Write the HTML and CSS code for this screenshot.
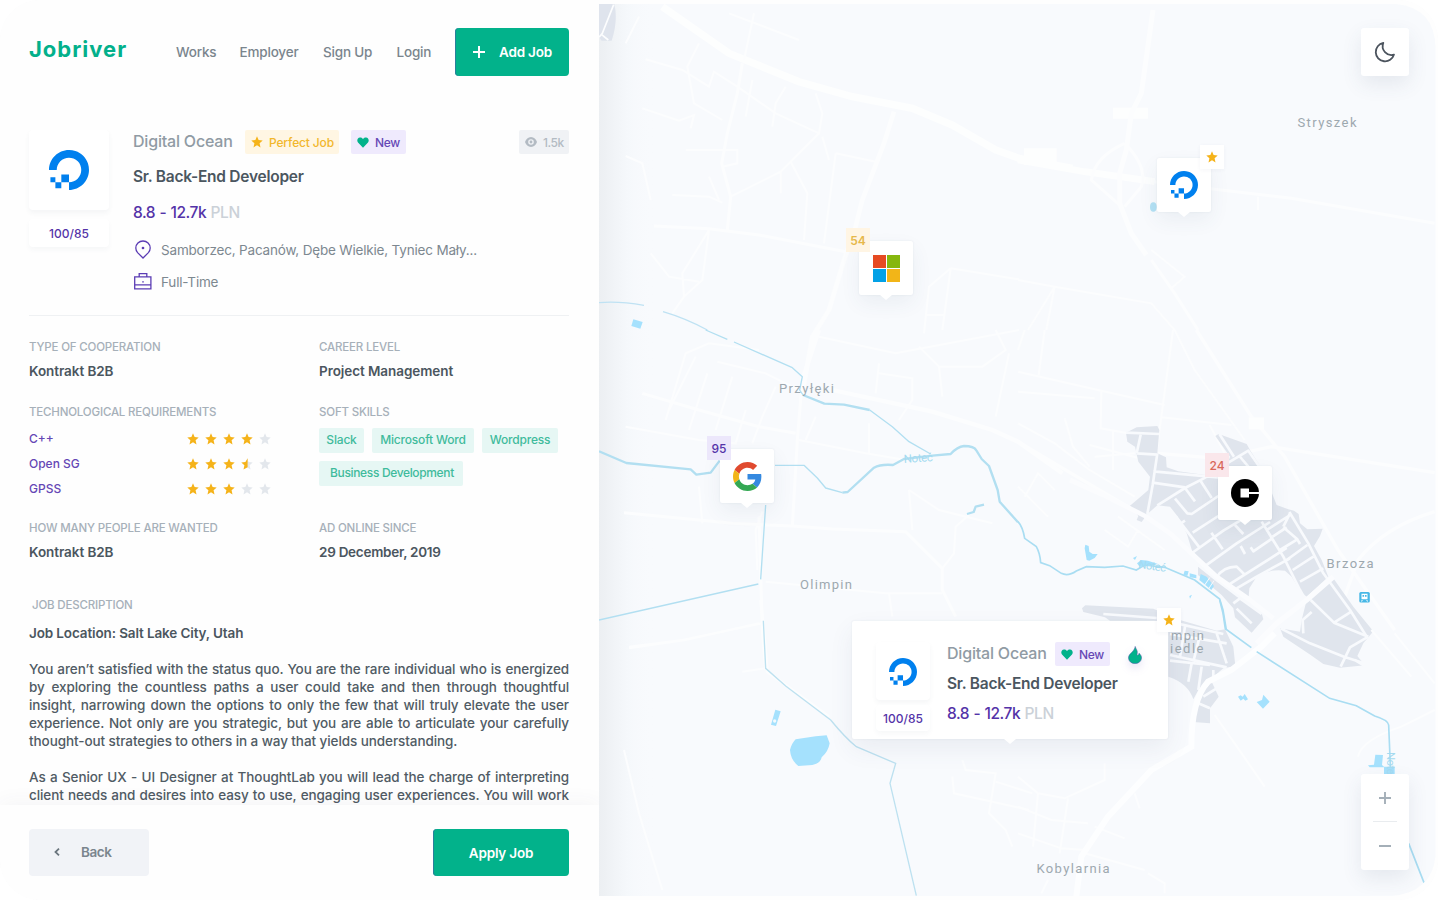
FILE: index.html
```html
<!DOCTYPE html>
<html lang="en">
<head>
<meta charset="utf-8">
<title>Jobriver</title>
<link rel="stylesheet" href="styles.css">
</head>
<body>
<svg class="defs" width="0" height="0">
  <symbol id="do" viewBox="0 0 24 24"><path fill="#0080ee" d="M12.04 0C5.408-.02.005 5.37.005 11.992h4.638c0-4.923 4.882-8.731 10.064-6.855a6.95 6.95 0 014.147 4.148c1.889 5.177-1.924 10.055-6.840 10.064v-4.610H7.391v4.623h4.610V24c7.860 0 13.967-7.588 11.397-15.830-1.115-3.590-3.985-6.446-7.575-7.575A12.800 12.800 0 0012.039 0zM7.390 19.362H3.828v3.564H7.390zm-3.563 0v-2.978H.85v2.978z"/></symbol>
  <symbol id="star" viewBox="0 0 12 12"><path fill="currentColor" d="M6 .3l1.6 3.800 4.100.4-3.100 2.700.9 4.200L6 9.200 2.500 11.400l.9-4.200L.3 4.500l4.100-.4z"/></symbol>
  <symbol id="half" viewBox="0 0 12 12"><path fill="#e3e7ec" d="M6 .3l1.600 3.800 4.100.4-3.100 2.700.9 4.200L6 9.200z"/><path fill="#f5b31a" d="M6.600 .3v9L2.500 11.400l.9-4.200L.3 4.500l4.100-.4z"/></symbol>
  <symbol id="heart" viewBox="0 0 12 11"><path fill="#02b28b" d="M6 10.800L1 5.600C-.4 3.800.3.600 3 .4 4.400.3 5.400 1 6 2 6.600 1 7.600.3 9 .4c2.700.2 3.400 3.400 2 5.200z"/></symbol>
</svg>
<div class="app">
  <section class="panel">
    <header class="top">
      <div class="brand">Jobriver</div>
      <nav class="nav"><a class="n1">Works</a><a class="n2">Employer</a><a class="n3">Sign Up</a><a class="n4">Login</a></nav>
      <button class="btn add"><svg width="12" height="12" viewBox="0 0 12 12"><path d="M6 0v12M0 6h12" stroke="#fff" stroke-width="2"/></svg><span>Add Job</span></button>
    </header>

    <main class="content">
      <article class="job">
        <div class="side">
          <div class="logo"><svg width="40" height="40"><use href="#do"/></svg></div>
          <div class="rate">100/85</div>
        </div>
        <div class="info">
          <div class="line head">
            <span class="company">Digital Ocean</span>
            <span class="badge gold"><svg width="12" height="12"><use href="#star"/></svg>Perfect Job</span>
            <span class="badge violet"><svg width="12" height="11"><use href="#heart"/></svg>New</span>
            <span class="badge grey"><svg width="12" height="10" viewBox="0 0 12 10"><path fill="#b3bbc3" fill-rule="evenodd" d="M6 0C9 0 11 2.200 12 5 11 7.800 9 10 6 10S1 7.800 0 5C1 2.200 3 0 6 0zM6 2.200a2.800 2.800 0 100 5.600 2.800 2.800 0 000-5.600z"/><circle cx="6" cy="5" r="1.400" fill="#b3bbc3"/></svg>1.5k</span>
          </div>
          <h1 class="title">Sr. Back-End Developer</h1>
          <div class="salary">8.8 - 12.7k <i>PLN</i></div>
          <div class="meta m1"><svg width="20" height="20" viewBox="0 0 20 20" fill="none" stroke="#5b3cb4" stroke-width="1.300"><path d="M10 18L4.600 12.600A7 7 0 012.800 8a7.200 7 0 0114.400 0 7 7 0 01-1.800 4.600z"/><circle cx="10" cy="8" r=".7" fill="#5b3cb4"/></svg><span>Samborzec, Pacanów, Dębe Wielkie, Tyniec Mały...</span></div>
          <div class="meta m2"><svg width="20" height="20" viewBox="0 0 20 20" fill="none" stroke="#5b3cb4" stroke-width="1.300"><path d="M1.700 4.800h16.200v12H1.700zM6.200 4.800V1.600h7.600v3.200M1.700 12.800h16.200M9.200 9.800h1.600"/></svg><span>Full-Time</span></div>
        </div>
      </article>

      <div class="facts">
        <div class="fact"><div class="label l1">Type of cooperation</div><div class="value v1">Kontrakt B2B</div></div>
        <div class="fact"><div class="label l2">Career level</div><div class="value v2">Project Management</div></div>
        <div class="fact tall">
          <div class="label l3">Technological requirements</div>
          <div class="skill"><span>C++</span><div class="stars"><svg><use href="#star"/></svg><svg><use href="#star"/></svg><svg><use href="#star"/></svg><svg><use href="#star"/></svg><svg class="off"><use href="#star"/></svg></div></div>
          <div class="skill"><span>Open SG</span><div class="stars"><svg><use href="#star"/></svg><svg><use href="#star"/></svg><svg><use href="#star"/></svg><svg><use href="#half"/></svg><svg class="off"><use href="#star"/></svg></div></div>
          <div class="skill"><span>GPSS</span><div class="stars"><svg><use href="#star"/></svg><svg><use href="#star"/></svg><svg><use href="#star"/></svg><svg class="off"><use href="#star"/></svg><svg class="off"><use href="#star"/></svg></div></div>
        </div>
        <div class="fact tall">
          <div class="label l4">Soft skills</div>
          <div class="tags"><span class="t1">Slack</span><span class="t2">Microsoft Word</span><span class="t3">Wordpress</span><span class="t4">Business Development</span></div>
        </div>
        <div class="fact"><div class="label l5">How many people are wanted</div><div class="value v1">Kontrakt B2B</div></div>
        <div class="fact"><div class="label l6">Ad online since</div><div class="value v3">29 December, 2019</div></div>
      </div>

      <section class="desc">
        <div class="label l7">Job description</div>
        <div class="value place">Job Location: Salt Lake City, Utah</div>
        <p><span>You aren’t satisfied with the status quo. You are the rare individual who is energized</span><span>by exploring the countless paths a user could take and then through thoughtful</span><span>insight, narrowing down the options to only the few that will truly elevate the user</span><span>experience. Not only are you strategic, but you are able to articulate your carefully</span><span class="end">thought-out strategies to others in a way that yields understanding.</span></p>
        <p><span>As a Senior UX - UI Designer at ThoughtLab you will lead the charge of interpreting</span><span>client needs and desires into easy to use, engaging user experiences. You will work</span></p>
      </section>
    </main>

    <footer class="actions">
      <button class="btn back"><svg width="6" height="8" viewBox="0 0 6 8"><path d="M5 .7L1.500 4 5 7.300" fill="none" stroke="#6b767e" stroke-width="1.800"/></svg><span>Back</span></button>
      <button class="btn apply">Apply Job</button>
    </footer>
  </section>

  <section class="map">
    <svg class="ground" width="839" height="900" viewBox="599 0 839 900" fill="none">
      <defs>
        <linearGradient id="edge"><stop offset="0" stop-color="#eceff2"/><stop offset=".28" stop-color="#f1f4f7"/><stop offset=".5" stop-color="#f5f8fb"/><stop offset="1" stop-color="#f8fafd" stop-opacity="0"/></linearGradient>
        <clipPath id="frame"><path d="M599 4H1396Q1435 8 1435.500 48V856Q1432 892 1392 896H599z"/></clipPath>
      </defs>
      <g clip-path="url(#frame)">
      <rect x="599" y="4" width="837" height="892" fill="#f8fafd"/>
      <rect x="599" y="4" width="56" height="892" fill="url(#edge)"/>

      <!-- north-west roads -->
      <g transform="translate(599 0) scale(.33333)" stroke="#fcfdfe" stroke-width="6">
        <path fill="#dfe4ed" stroke="none" d="M0 12H46Q58 60 38 122H8L0 112z"/>
        <path stroke-width="5" d="M44 14L10 100L0 112M8 104l20 16"/>
        <path stroke-width="22" stroke="#fdfefe" d="M190 20L390 160L600 245L760 290L940 325L1060 375L1190 450L1260 475L1420 505"/>
        <path stroke-width="14" d="M885 335L855 430L790 600L770 680L735 780L690 930L640 1010L610 1180"/>
        <path stroke-width="9" d="M430 190L415 280L385 400L368 490L395 590L385 690M165 678L330 686L480 705L740 755"/>
        <path d="M465 40L435 180M390 40L600 120M300 130L265 200L285 310L370 360M140 178L250 210L330 260L345 215L415 260L530 340L660 400L670 340L650 280M560 260L530 310L520 380M660 400L580 480L545 515L395 590M575 485L625 580L615 720M670 410L690 480M710 460L675 730M710 460L830 485M545 515V580M260 450H415V490L370 500M220 585L330 590L370 608M330 530L360 600M130 325L240 362L285 345L275 385M330 690L250 820L255 890L310 840L330 690M255 890L220 940M155 760L210 830L300 845M80 468L130 490L155 600M1055 805L1030 990M1055 805L1260 838M1055 805L990 860L975 1000M980 945h55M460 240L440 350M120 50L80 130"/>
        <path stroke="#bfe2f3" stroke-width="4" d="M0 908Q60 903 135 916M192 935Q260 955 325 990"/>
        <path fill="#a5e1fd" stroke="none" d="M103 958L131 966L124 986L97 978z"/>
      </g>

      <!-- north-east roads -->
      <g transform="translate(1018 0) scale(.33333)" stroke="#fcfdfe" stroke-width="6">
        <path stroke="#fdfefe" stroke-width="20" d="M0 480L200 515L410 545"/>
        <path fill="#fdfefe" stroke="none" d="M18 445h98v50H18zM285 323h105v33H285z"/>
        <path stroke-width="15" d="M405 30L370 280L340 340L325 450L305 520L305 610L340 700L385 765"/>
        <path stroke-width="9" d="M400 780L470 880L540 990M590 568L820 595L1250 670M410 545L590 568M320 430Q230 470 220 540L310 620M320 430Q390 500 370 560L320 620"/>
        <path d="M0 840L110 860L400 910L470 990M110 860L30 990M110 860L85 990M400 750L500 830L460 865M720 590v40"/>
        <ellipse cx="406" cy="621" rx="10" ry="14" fill="#b3e1f4" stroke="none"/>
      </g>

      <!-- west roads and rivers -->
      <g transform="translate(599 330) scale(.33333)" stroke="#fcfdfe" stroke-width="6">
        <path stroke-width="13" d="M660 0L610 150M700 180L1000 245L1180 300L1257 335L1390 430"/>
        <path stroke-width="9" d="M610 150L595 330L580 590M130 190L300 240L480 290L590 310M75 548L400 580L580 588L700 597L920 605L1030 715V780L1070 860M480 560L490 900L500 1020"/>
        <path d="M200 270L260 70L330 40L480 60M290 80L210 240M355 95L500 130L600 180M325 130L270 300M400 140L350 300M440 240L410 340L300 330L80 290M530 170L490 260L460 340M600 330L800 370L920 390M650 260L620 330M810 280V370M840 100L830 190M840 130L940 145V210L900 270M660 20L890 70L1260 0M960 50L1020 110L1030 200M1020 110H1150L1220 60L1190 0M1230 70L1190 260M300 470L310 580M930 480L940 600M930 480L1020 540L1180 580M1110 555L1070 590L1065 670L1030 715M500 755L860 790H1030M870 790L880 860M490 545L470 600L475 720M90 950L250 930L490 880"/>
        <g stroke="#b2dff1" stroke-linejoin="round">
          <path stroke-width="4" d="M320 0L385 28M405 36L580 113L610 140L602 180L612 195M812 240L880 290L930 335L995 372M528 406H615L655 444L680 474L730 488M500 525L485 748M478 762L0 870"/>
          <path stroke-width="7" d="M612 195L676 221L735 224L812 240M0 364L82 399L275 418L292 434L335 428L362 392M730 488L746 486L825 413Q845 402 882 405L915 387L1000 377L1055 372Q1075 350 1095 348Q1125 348 1132 361L1148 387L1170 408L1196 480L1202 515L1257 577M1104 552L1124 546L1130 530L1155 524"/>
        </g>
      </g>

      <!-- minor roads of the east -->
      <g transform="translate(1018 330) scale(.33333)" stroke="#fcfdfe" stroke-width="6">
        <path d="M0 125L240 180L440 225M0 185L230 205M250 180L248 295L330 310M465 0L430 260L415 370M470 0L530 120L680 330M430 262L640 285M575 285L620 370M20 0L0 60M80 0L62 135M140 265L165 350L215 410M0 280L110 340L215 420L350 500M215 345L420 400M285 300V420M230 380L350 370M0 470L90 560M20 500L60 430L110 480M260 600L330 650L360 600M300 560L440 660M375 560L440 600"/>
        <path stroke-width="10" d="M535 0L700 260L800 380L960 660L1130 900M420 370L600 385L760 350L1250 428M1250 545Q1100 590 1020 690L980 800M0 335L160 430L380 560"/>
        <path fill="#fdfefe" stroke="none" d="M692 262h46v36h-46z"/>
      </g>

      <!-- built-up area of Brzoza and Olimpin -->
      <g transform="translate(1070 410) scale(.33333)" stroke-linejoin="round">
        <g fill="#e0e5ed">
          <path d="M168 68L200 52L262 48L268 60L262 130L288 142L290 172L325 184L444 200V250H606L620 285L655 298L672 302L686 312L690 340L712 358L758 356L750 378L732 408L755 450L775 500L710 560L692 545L665 500L645 482Q600 475 560 500L538 535L536 560L450 510L370 435L350 370L322 318L300 290L262 286L232 312L215 336L200 330L205 318L180 287L210 262L235 240L240 200L205 155L195 110L172 95z"/>
          <path d="M436 78L446 72L530 102L540 120L570 168H470L480 140z"/>
          <path d="M384 470L440 515L500 560L575 610L580 628L545 668L495 622L490 595L455 555L384 495z"/>
          <path d="M710 570L790 505L850 590L910 664L880 700L862 738L885 766L810 773L760 762L722 735L640 680L630 655L690 665L695 630z"/>
          <path d="M36 595L46 586L250 596L330 630L440 662L465 658L490 710L496 768L460 775L430 800L385 840L370 868Q355 820 295 800V632H120L105 622L40 606z"/>
          <path d="M425 815L446 860L420 895V940L370 936L378 870z"/>
        </g>
        <g stroke="#f8fafd" stroke-width="8">
          <path d="M168 68L268 72M212 74L200 130M200 130L262 134M262 130L248 225L232 312M250 184L444 202M248 218L345 232M442 180L400 206L345 234L262 286M448 72L492 140M475 158L535 122L575 180M508 138L535 170"/>
          <path d="M345 234L375 274M390 210L425 264M315 266L352 310L365 312L445 258M325 345L345 332M318 320L388 412M368 368L445 318M362 432L460 362L530 320M408 466L500 400L600 336M424 368L458 418M495 345L520 372M440 502Q460 470 500 470L522 492M480 522L650 414M500 535L560 500L660 445M512 408L525 432M542 412L550 424L606 386"/>
          <path d="M575 335L640 440L690 540L710 575M590 360L665 312M608 380L650 352M640 352L682 388L690 402M630 420L682 388M650 450L712 405M668 480L730 440M690 515L760 475M658 306L715 400L760 490L840 600L890 680M660 310L640 350"/>
          <path d="M490 580L510 565L575 612M500 596L545 640M722 570L792 638L895 680M792 638L845 604M632 655L720 700L822 740L915 770M812 770L840 712L895 680M700 670L698 630L725 606M855 750L885 768"/>
          <path d="M100 612L260 624M320 640L460 672M300 672L470 700M300 735L470 772M300 752L420 765M365 760L355 815M395 770L385 840M430 780V800M345 650L330 740M392 668L370 755M440 670L470 760M385 880L420 895M400 860L440 835"/>
        </g>
        <g stroke="#fbfcfe">
          <path stroke-width="14" d="M0 210L100 255L225 318L300 370L370 435L440 500L540 570L610 625"/>
          <path stroke-width="16" d="M560 700L620 640L710 570L790 500"/>
        </g>
      </g>

      <g transform="translate(1018 330) scale(.33333)">
        <path stroke-width="5" stroke="#a9ddf2" d="M0 575Q14 590 20 625L55 650Q66 670 68 698L95 707L130 730Q150 740 175 723L205 710L260 712L315 708L355 720L380 705L440 712L530 750L605 807L615 840L625 900"/>
        <g fill="#a5e1fd"><path d="M202 644L212 648L214 665L224 672L239 672L230 684L214 692L206 690L200 655zM345 684l12-6-6 12zM357 700L370 690L390 692L420 702L400 706L365 710zM500 722l12 2-4 14-12-3zM515 730l20 5 0 10-20-3zM548 732l18 8 22 28-8 12-24-20-12-10zM514 798l8-4-6 12z"/></g>
        <path stroke="#f8fafd" stroke-width="3" d="M560 765L576 742M572 776L588 752"/>
      </g>

      <!-- south-west water -->
      <g transform="translate(599 600) scale(.33333)" stroke="#fcfdfe" stroke-width="6">
        <path stroke-width="9" d="M485 0L495 100L505 215L690 350"/>
        <path d="M90 145L260 120L480 70M430 215L500 205M75 450L120 640L190 870M1090 480L1100 510L1190 520L1170 640L1220 690L1240 740M1060 530L1065 580L1180 605L1290 630M1190 545L1300 580"/>
        <path stroke="#bde1f0" stroke-width="4" d="M493 62L500 205L560 258L695 360Q740 415 772 440L890 490L873 550L952 887"/>
        <g fill="#a5e1fd" stroke="none"><path d="M590 418L650 409L683 406L692 430Q688 455 668 472Q665 490 640 495L598 498Q575 480 573 450Q578 430 590 418zM529 329L545 334L531 378L516 374z"/><circle cx="527" cy="363" r="5" fill="#f2fafe"/></g>
      </g>

      <!-- south-east roads and river -->
      <g transform="translate(1018 600) scale(.33333)" stroke="#fcfdfe" stroke-width="6">
        <path d="M0 530L60 580L140 595L260 540V490M150 595L125 760M60 580L45 740M0 620L100 660L210 670M0 700L130 745L200 750M230 680L320 715M350 580L365 625M590 345L650 430L740 560M1250 330L1150 380Q1030 420 1020 470M200 760L380 810M90 840l-20 40M390 820L440 850V880M1060 90L1180 230M1130 100L1250 250"/>
        <path stroke-width="18" stroke="#fdfeff" d="M770 100L730 140L640 210L570 245Q520 300 520 440L400 510L270 650L190 770L175 890"/>
        <path stroke-width="5" stroke="#a9ddf2" d="M605 0L615 40L622 86L700 143M716 155L935 295L1015 317L1070 348Q1110 360 1112 375L1118 520M1172 730L1218 848"/>
        <g fill="#a5e1fd" stroke="none"><path d="M660 290L668 286L674 290L680 282L690 298L682 302L676 296L668 302zM716 306L732 300L736 284L755 305L735 326zM1072 464L1095 465L1092 495L1098 500H1130V522H1098V502L1055 502L1050 496L1068 494z"/></g>
      </g>

      <rect x="1359.300" y="592" width="10.500" height="10.500" rx="1.500" fill="#46b7e6"/>
      <path fill="#fff" d="M1361.500 593.800h6v5.500h-6zM1361.500 600.300h1.500l-1 1.200h-1zM1366 600.300h1.500l.6 1.200h-1z"/><path fill="#46b7e6" d="M1362.500 595h1.600v1.700h-1.600zM1365 595h1.600v1.700h-1.600z"/>

      <g class="river-names">
        <text x="904" y="463" textLength="29" transform="rotate(-4 904 463)">Noteć</text>
        <text x="1138" y="568" textLength="28" transform="rotate(8 1138 568)">Noteć</text>
        <text x="1387" y="752" textLength="28" transform="rotate(90 1387 752)">Noteć</text>
      </g>
      <g class="towns">
        <text x="1297.500" y="127" textLength="59">Stryszek</text>
        <text x="779" y="392.500" textLength="55">Przyłęki</text>
        <text x="800" y="589" textLength="52">Olimpin</text>
        <text x="1326.500" y="568" textLength="47">Brzoza</text>
        <text x="1036.500" y="873" textLength="73">Kobylarnia</text>
        <text x="1171" y="640" textLength="33">mpin</text>
        <text x="1170" y="653" textLength="33.500">iedle</text>
      </g>
      </g>
    </svg>

    <div class="pin ms"><svg width="27" height="27" viewBox="0 0 27 27"><path fill="#e64a22" d="M0 0h13v13H0z"/><path fill="#86b70e" d="M14 0h13v13H14z"/><path fill="#03a1e6" d="M0 14h13v13H0z"/><path fill="#f2b518" d="M14 14h13v13H14z"/></svg><span class="mark gold">54</span></div>
    <div class="pin ocean"><svg width="28" height="28"><use href="#do"/></svg><span class="mark fav"><svg width="12" height="12"><use href="#star"/></svg></span></div>
    <div class="pin google"><svg width="29" height="29" viewBox="0 0 48 48"><path fill="#e04a2f" d="M24 9.500c3.540 0 6.710 1.220 9.210 3.600l6.850-6.850C35.900 2.380 30.470 0 24 0 14.620 0 6.510 5.380 2.560 13.220l7.980 6.190C12.430 13.720 17.740 9.500 24 9.500z"/><path fill="#3489e0" d="M46.980 24.550c0-1.570-.15-3.090-.38-4.550H24v9.020h12.940c-.58 2.960-2.260 5.480-4.780 7.180l7.730 6c4.510-4.180 7.090-10.360 7.090-17.650z"/><path fill="#f2b518" d="M10.530 28.590c-.48-1.450-.76-2.990-.76-4.590s.27-3.140.76-4.590l-7.980-6.190C.92 16.460 0 20.120 0 24c0 3.880.92 7.540 2.560 10.780l7.970-6.190z"/><path fill="#34a853" d="M24 48c6.480 0 11.930-2.130 15.890-5.810l-7.730-6c-2.150 1.450-4.920 2.300-8.160 2.300-6.260 0-11.570-4.220-13.470-9.910l-7.980 6.190C6.510 42.620 14.620 48 24 48z"/></svg><span class="mark violet">95</span></div>
    <div class="pin uber"><svg width="28" height="28" viewBox="0 0 28 28"><circle cx="14" cy="14" r="14"/><path fill="#fff" d="M9.500 9.500h8.500v3.500h10v2H18v3.500H9.500z"/></svg><span class="mark red">24</span></div>

    <article class="popup">
      <div class="side small">
        <div class="logo"><svg width="28" height="28"><use href="#do"/></svg></div>
        <div class="rate">100/85</div>
      </div>
      <div class="info">
        <div class="line head">
          <span class="company">Digital Ocean</span>
          <span class="badge violet"><svg width="12" height="11"><use href="#heart"/></svg>New</span>
          <svg class="flame" width="14" height="18" viewBox="0 0 14 18"><path fill="#02b28b" stroke="#4b55a5" stroke-width=".5" d="M7.200.4C7.800 3 10 4.500 9.200 7.500 8.600 9.500 10 10 10.800 8.200L11 7.200C12.500 8.500 13.700 10 13.500 12 13.300 15.500 10.500 17.600 7 17.600S.7 15.400.5 12C.4 8.800 3 7.500 4.800 5.200 5.800 4 6.800 2.500 7.200.4z"/></svg>
        </div>
        <h2 class="title">Sr. Back-End Developer</h2>
        <div class="salary">8.8 - 12.7k <i>PLN</i></div>
      </div>
      <span class="mark fav"><svg width="12" height="12"><use href="#star"/></svg></span>
    </article>

    <button class="tool theme"><svg width="22" height="22" viewBox="0 0 22 22"><path d="M9.300 1.900A9.300 9.300 0 1020 13.600 8.800 8.800 0 019.300 1.900z" fill="none" stroke="#4c545e" stroke-width="1.800" stroke-linejoin="round"/></svg></button>
    <div class="tool zoom">
      <svg width="12" height="12" viewBox="0 0 12 12"><path d="M6 0v12M0 6h12" stroke="#a4afb8" stroke-width="1.900"/></svg>
      <i></i>
      <svg width="12" height="12" viewBox="0 0 12 12"><path d="M0 6h12" stroke="#a4afb8" stroke-width="1.900"/></svg>
    </div>
  </section>
</div>
</body>
</html>
```
FILE: styles.css
```css
* { box-sizing: border-box; margin: 0; padding: 0; }
body { width: 1438px; height: 900px; overflow: hidden; background: #fff; font-family: Inter, "Liberation Sans", sans-serif; color: #505b64; }
button { border: 0; font: inherit; }
i { font-style: normal; }
svg { flex: none; display: block; }
.defs { position: absolute; }
.app { display: flex; width: 1438px; height: 900px; border-radius: 40px; overflow: hidden; box-shadow: inset 0 0 0 1px #fafbfc; }

.panel { width: 599px; height: 900px; display: flex; flex-direction: column; background: #fefefe; flex: none; overflow: hidden; }
.top { height: 130px; padding: 28px 30px 0 29px; display: flex; align-items: flex-start; flex: none; }
.brand { width: 147px; line-height: 43px; font-size: 22px; font-weight: 650; color: #03b08b; letter-spacing: 1px; }
.nav { display: flex; width: 279px; line-height: 48px; font-size: 13.500px; font-weight: 500; color: #7a858d; letter-spacing: -.18px; white-space: nowrap; }
.n1 { width: 63.500px; } .n2 { width: 83.500px; } .n3 { width: 73.500px; }
.btn { display: flex; align-items: center; border-radius: 4px; font-size: 13.500px; font-weight: 600; color: #fff; background: #02b28b; box-shadow: inset 1px 0 0 #2a7f9c; white-space: nowrap; }
.add { width: 114px; height: 48px; padding-left: 18px; gap: 14px; letter-spacing: -.2px; }

.content { flex: 1; min-height: 0; overflow: hidden; padding: 0 30px 0 29px; }
.job { display: flex; gap: 24px; height: 186px; border-bottom: 1px solid #eff1f3; }
.side { width: 80px; flex: none; display: flex; flex-direction: column; gap: 9px; }
.logo { height: 80px; display: grid; place-items: center; background: #fff; border-radius: 4px; box-shadow: 0 3px 5px rgba(60,70,90,.05); }
.rate { height: 28px; line-height: 30px; text-align: center; font-size: 12px; font-weight: 450; color: #5433a8; background: #fff; border-radius: 4px; box-shadow: 0 3px 5px rgba(60,70,90,.04); }
.info { flex: 1; white-space: nowrap; }
.line { display: flex; height: 24px; }
.company { width: 112px; line-height: 22px; font-size: 16px; font-weight: 500; color: #909ba4; letter-spacing: -.2px; }
.badge { display: flex; align-items: center; gap: 6px; height: 24px; padding-left: 6px; border-radius: 2px; font-size: 12px; font-weight: 450; letter-spacing: -.15px; }
.badge.gold { width: 94px; margin-right: 12px; color: #f2b72c; background: #fff6e3; }
.badge.gold svg, .stars svg, .fav svg { color: #f5b31a; }
.badge.violet { width: 55px; color: #6547b5; background: #efeafd; letter-spacing: -.3px; }
.badge.grey { width: 50px; margin-left: auto; color: #b3bbc3; background: #f0f2f5; letter-spacing: -.5px; }
.title { line-height: 24px; margin-top: 11px; font-size: 15.500px; font-weight: 600; color: #4b565f; letter-spacing: -.25px; }
.salary { line-height: 24px; margin-top: 12px; font-size: 15.500px; font-weight: 500; color: #5433a8; letter-spacing: -.45px; word-spacing: .6px; }
.salary i { color: #cbd1d8; letter-spacing: -.3px; }
.meta { display: flex; align-items: center; gap: 8px; height: 24px; font-size: 13.500px; color: #7d8890; letter-spacing: -.18px; }
.m1 { margin-top: 13px; } .m2 { margin-top: 8px; }

.facts { display: grid; grid-template-columns: 290px 250px; grid-template-rows: 65px 116px 77px; margin-top: 23px; }
.label { line-height: 16px; font-size: 11.500px; font-weight: 450; color: #a6b0b9; text-transform: uppercase; white-space: nowrap; letter-spacing: -.18px; }
.value { line-height: 20px; margin-top: 6px; font-size: 13.500px; font-weight: 600; color: #4b565f; white-space: nowrap; letter-spacing: -.07px; }
.v3 { letter-spacing: -.27px; }
.skill { display: flex; width: 242px; height: 25px; align-items: center; justify-content: space-between; font-size: 12px; font-weight: 450; color: #6547b5; }
.label + .skill { margin-top: 6px; }
.stars { display: flex; gap: 6px; }
.stars svg { width: 12px; height: 12px; }
.stars svg.off { color: #e3e7ec; }
.tags { display: flex; flex-wrap: wrap; gap: 8px; margin-top: 8px; }
.tags span { height: 25px; line-height: 24px; text-align: center; border-radius: 2px; font-size: 12px; font-weight: 500; color: #3fbb9c; background: #e6f7f4; white-space: nowrap; letter-spacing: -.18px; }
.t1 { width: 45px; } .t2 { width: 102px; } .t3 { width: 76px; } .tags .t4 { width: 144px; padding-left: 2px; letter-spacing: -.35px; }
.desc .label { padding-left: 3px; }
.desc .value { margin-top: 10px; margin-bottom: 17px; letter-spacing: -.13px; }
.desc p { margin-bottom: 18px; font-size: 13.500px; font-weight: 450; line-height: 18px; color: #505b64; letter-spacing: -.08px; }
.desc p span { display: block; text-align: justify; text-align-last: justify; white-space: nowrap; }
.desc p .end { text-align-last: left; }

.actions { height: 95px; flex: none; padding: 24px 30px 0 29px; display: flex; justify-content: space-between; background: #fefefe; box-shadow: 0 -4px 18px rgba(60,70,90,.045); z-index: 1; }
.back { width: 120px; height: 47px; padding: 0 0 1px 25px; gap: 21px; background: #f1f3f7; color: #7a858d; box-shadow: none; letter-spacing: -.4px; }
.apply { width: 136px; height: 47px; justify-content: center; padding-top: 1px; letter-spacing: -.2px; }

.map { position: relative; width: 839px; height: 900px; flex: none; background: #fefefe; }
.towns text { font: 13px Roboto, sans-serif; fill: #9da8af; }
.river-names text { font: 11.500px Roboto, sans-serif; fill: #a4daf0; }
.pin { position: absolute; width: 54px; height: 54px; display: grid; place-items: center; background: #fff; border-radius: 2px; box-shadow: 0 0 2px rgba(60,80,110,.1), 0 8px 20px rgba(60,80,110,.07); }
.pin::after, .popup::after { content: ""; position: absolute; left: 50%; top: 100%; margin-left: -6px; border: 6px solid transparent; border-top: 5px solid #fff; border-bottom: 0; }
.ms { left: 260px; top: 241px; }
.ocean { left: 558px; top: 158px; }
.google { left: 121px; top: 449px; }
.uber { left: 619px; top: 466px; }
.mark { position: absolute; left: -13px; top: -13px; width: 24px; height: 24px; display: grid; place-items: center; font-size: 12px; font-weight: 600; }
.mark.gold { color: #e6b84a; background: #fff5e4; }
.mark.violet { color: #5433a8; background: #ece7fb; font-weight: 450; }
.mark.red { color: #d9695b; background: rgba(250,229,233,.92); font-weight: 500; }
.mark.fav { left: auto; right: -13px; background: #fff; box-shadow: 0 1px 4px rgba(60,80,110,.05); }
.popup { position: absolute; left: 253px; top: 621px; width: 316px; height: 118px; padding: 21px 0 0 24px; display: flex; gap: 17px; background: #fff; border-radius: 2px; box-shadow: 0 0 2px rgba(60,80,110,.1), 0 10px 24px rgba(60,80,110,.08); }
.small { width: 54px; gap: 5px; }
.small .logo { height: 58px; padding-top: 2px; }
.small .rate { height: 26px; line-height: 27px; }
.popup .company { width: 108px; line-height: 23px; }
.popup .title { margin-top: 6px; }
.popup .salary { margin-top: 6px; }
.flame { margin: 4px 0 0 18px; filter: drop-shadow(0 4px 4px rgba(90,60,180,.15)); }
.tool { position: absolute; left: 762px; width: 48px; display: grid; place-items: center; background: #fff; border-radius: 3px; box-shadow: 0 8px 20px rgba(60,80,110,.1); }
.theme { top: 28px; height: 48px; }
.zoom { top: 774px; height: 96px; grid-template-rows: 47px 1px 48px; }
.zoom i { width: 24px; height: 1px; background: #e9ecef; }
```
